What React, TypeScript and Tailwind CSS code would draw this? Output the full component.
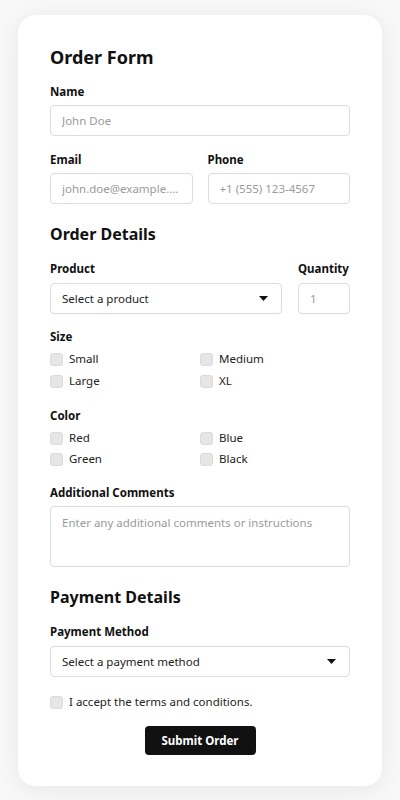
import React from "react";

const font = { fontFamily: '"Noto Sans", "Open Sans", sans-serif' };

const Label = ({ children, gap = "mb-[5px]" }: { children: React.ReactNode; gap?: string }) => (
  <label className={"block text-[11.5px] leading-4 font-bold text-[#111] " + gap}>{children}</label>
);

const inputCls =
  "w-full h-[31px] px-[11px] border border-[#dcdcdc] rounded-[4px] bg-white text-[11.5px] text-[#222] placeholder:text-[#9a9a9a] text-ellipsis outline-none";

const Caret = () => (
  <svg width="9" height="5" viewBox="0 0 9 5" className="shrink-0">
    <path d="M0 0h9L4.5 5z" fill="#111" />
  </svg>
);

const Check = ({ label }: { label: string }) => (
  <label className="flex items-center gap-[6px] h-4 text-[11.5px] text-[#222]">
    <span className="w-[13px] h-[13px] rounded-[3px] bg-[#e6e6e6] border border-[#dadada] shrink-0" />
    {label}
  </label>
);

export default function App() {
  return (
    <div className="min-h-[800px] bg-[#f8f8f8] pt-[15px] px-[18px] pb-[15px]" style={font}>
      <div className="bg-white rounded-[18px] shadow-[0_4px_24px_rgba(0,0,0,0.07)] px-8 pt-7 pb-[31px]">
        <h1 className="text-[18px] leading-7 font-bold text-[#111]">Order Form</h1>

        <div className="mt-[13px]">
          <Label>Name</Label>
          <input className={inputCls} placeholder="John Doe" />
        </div>

        <div className="mt-4 grid grid-cols-2 gap-[15px]">
          <div>
            <Label>Email</Label>
            <input className={inputCls} placeholder="john.doe@example.com" />
          </div>
          <div>
            <Label>Phone</Label>
            <input className={inputCls} placeholder="+1 (555) 123-4567" />
          </div>
        </div>

        <h2 className="mt-4 text-[16px] leading-7 font-bold text-[#111]">Order Details</h2>

        <div className="mt-[13px] flex gap-4">
          <div className="flex-1">
            <Label gap="mb-[6px]">Product</Label>
            <div className={inputCls + " flex items-center justify-between pr-[13px]"}>
              <span>Select a product</span>
              <Caret />
            </div>
          </div>
          <div className="w-[52px]">
            <Label gap="mb-[6px]">Quantity</Label>
            <input className={inputCls} placeholder="1" />
          </div>
        </div>

        <div className="mt-[15px]">
          <Label>Size</Label>
          <div className="grid grid-cols-2 gap-y-[6px] mt-[6px]">
            <Check label="Small" />
            <Check label="Medium" />
            <Check label="Large" />
            <Check label="XL" />
          </div>
        </div>

        <div className="mt-[19px]">
          <Label>Color</Label>
          <div className="grid grid-cols-2 gap-y-[5px] mt-[6px]">
            <Check label="Red" />
            <Check label="Blue" />
            <Check label="Green" />
            <Check label="Black" />
          </div>
        </div>

        <div className="mt-[18px]">
          <Label>Additional Comments</Label>
          <textarea
            className="w-full h-[61px] block px-[11px] py-[7px] border border-[#dcdcdc] rounded-[4px] text-[11.5px] text-[#222] placeholder:text-[#9a9a9a] outline-none resize-none"
            placeholder="Enter any additional comments or instructions"
          />
        </div>

        <h2 className="mt-4 text-[16px] leading-7 font-bold text-[#111]">Payment Details</h2>

        <div className="mt-[13px]">
          <Label gap="mb-[6px]">Payment Method</Label>
          <div className={inputCls + " flex items-center justify-between pr-[13px]"}>
            <span>Select a payment method</span>
            <Caret />
          </div>
        </div>

        <div className="mt-[17px]">
          <Check label="I accept the terms and conditions." />
        </div>

        <div className="mt-4 flex justify-center">
          <button className="h-[29px] px-[17px] rounded-[4px] bg-[#111] text-white text-[11.5px] font-bold">
            Submit Order
          </button>
        </div>
      </div>
    </div>
  );
}
